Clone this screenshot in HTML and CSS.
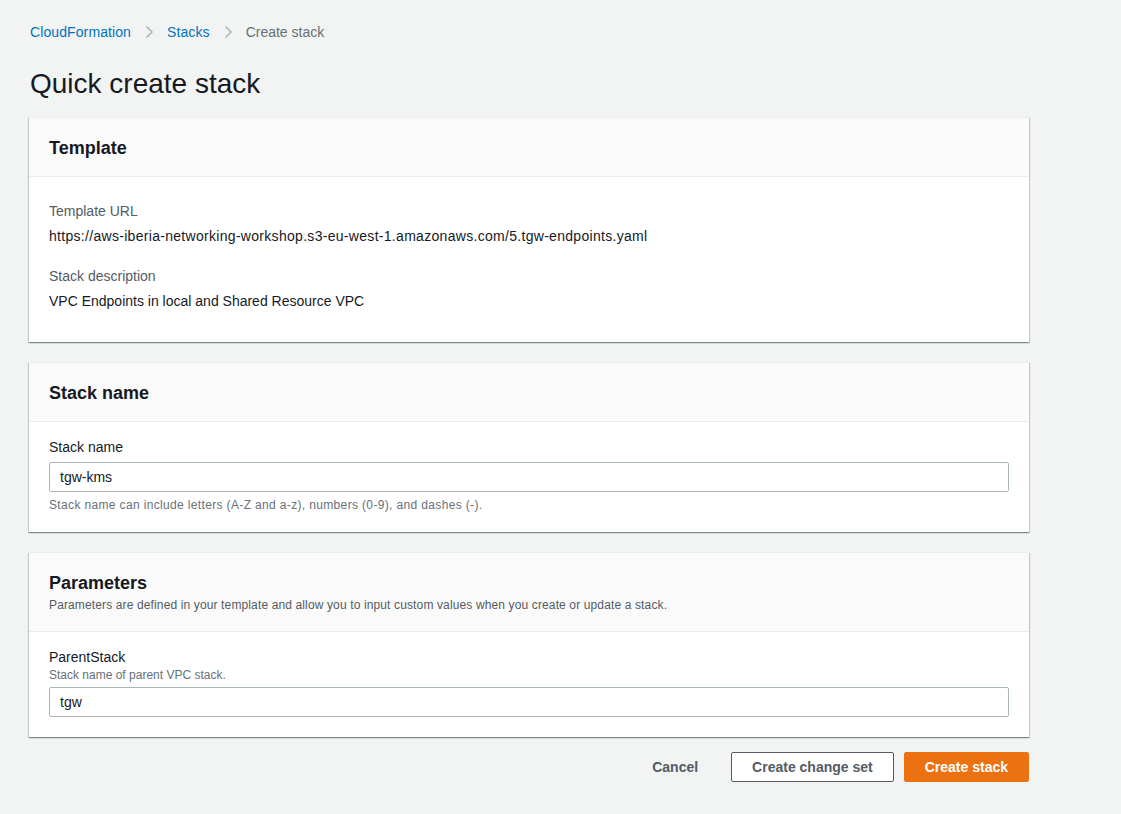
FILE: index.html
```html
<!DOCTYPE html>
<html lang="en">
<head>
<meta charset="utf-8">
<title>Quick create stack</title>
<link rel="stylesheet" href="styles.css">
</head>
<body>
<main class="page">
  <nav class="breadcrumbs">
    <a class="crumb-link" href="#">CloudFormation</a>
    <svg class="chev" width="14" height="14" viewBox="0 0 14 14"><path d="M4.5 1.5 L10 7 L4.5 12.5" fill="none" stroke="#aab7b8" stroke-width="1.5"/></svg>
    <a class="crumb-link" href="#">Stacks</a>
    <svg class="chev" width="14" height="14" viewBox="0 0 14 14"><path d="M4.5 1.5 L10 7 L4.5 12.5" fill="none" stroke="#aab7b8" stroke-width="1.5"/></svg>
    <span class="crumb-current">Create stack</span>
  </nav>

  <h1 class="page-title">Quick create stack</h1>

  <section class="card">
    <header class="card-header">
      <h2 class="card-title">Template</h2>
    </header>
    <div class="card-body card-body-template">
      <div class="kv">
        <div class="kv-label">Template URL</div>
        <div class="kv-value kv-url">https://aws-iberia-networking-workshop.s3-eu-west-1.amazonaws.com/5.tgw-endpoints.yaml</div>
      </div>
      <div class="kv">
        <div class="kv-label">Stack description</div>
        <div class="kv-value">VPC Endpoints in local and Shared Resource VPC</div>
      </div>
    </div>
  </section>

  <section class="card">
    <header class="card-header">
      <h2 class="card-title">Stack name</h2>
    </header>
    <div class="card-body card-body-name">
      <label class="field-label" for="stackname">Stack name</label>
      <input class="text-input" id="stackname" type="text" value="tgw-kms">
      <div class="field-hint">Stack name can include letters (A-Z and a-z), numbers (0-9), and dashes (-).</div>
    </div>
  </section>

  <section class="card">
    <header class="card-header card-header-desc">
      <h2 class="card-title">Parameters</h2>
      <p class="card-desc">Parameters are defined in your template and allow you to input custom values when you create or update a stack.</p>
    </header>
    <div class="card-body card-body-params">
      <label class="field-label field-label-tight" for="parent">ParentStack</label>
      <div class="field-desc">Stack name of parent VPC stack.</div>
      <input class="text-input" id="parent" type="text" value="tgw">
    </div>
  </section>

  <div class="actions">
    <button class="btn btn-link" type="button">Cancel</button>
    <button class="btn btn-normal" type="button">Create change set</button>
    <button class="btn btn-primary" type="button">Create stack</button>
  </div>
</main>
</body>
</html>
```

FILE: styles.css
```css
* { box-sizing: border-box; }

html, body {
  margin: 0;
  padding: 0;
  background: #f2f3f3;
}

body {
  font-family: "Liberation Sans", Arial, sans-serif;
  font-size: 14px;
  color: #16191f;
  width: 1121px;
  height: 814px;
  overflow: hidden;
}

.page {
  width: 1000px;
  margin-left: 29px;
  padding-top: 22px;
}

.breadcrumbs {
  display: flex;
  align-items: center;
  gap: 9px;
  height: 20px;
  padding-left: 1px;
  font-size: 14px;
}

.crumb-link {
  color: #0073bb;
  text-decoration: none;
  letter-spacing: 0.1px;
}

.chev { display: block; margin: 0 2px; }

.crumb-current { color: #687078; }

.page-title {
  margin: 24px 0 0 1px;
  font-size: 28px;
  font-weight: 400;
  line-height: 36px;
  color: #16191f;
}

.card {
  background: #fff;
  box-shadow: 0 1px 1px 0 rgba(0, 28, 36, 0.3), 1px 1px 1px 0 rgba(0, 28, 36, 0.15), -1px 1px 1px 0 rgba(0, 28, 36, 0.15);
  border-top: 1px solid #eaeded;
}

.card + .card { margin-top: 20px; }

.page-title + .card { margin-top: 15px; }

.card-header {
  background: #fafafa;
  border-bottom: 1px solid #eaeded;
  padding: 19px 20px 17px;
}

.card-header-desc { padding: 19px 20px 18px; }

.card-title {
  margin: 0;
  font-size: 18px;
  font-weight: 700;
  line-height: 22px;
  color: #16191f;
}

.card-desc {
  margin: 3px 0 0;
  font-size: 12px;
  line-height: 16px;
  color: #545b64;
  letter-spacing: 0.13px;
}

.card-body {
  padding: 15px 20px 20px;
}

.card-body-template {
  padding: 24px 20px 31px;
  display: flex;
  flex-direction: column;
  gap: 20px;
}

.card-body-name { padding-bottom: 19px; }

.card-body-params { padding-bottom: 20px; }

.kv-label {
  color: #545b64;
  line-height: 20px;
}

.kv-value {
  margin-top: 5px;
  line-height: 20px;
}

.kv-url { letter-spacing: 0.3px; }

.field-label {
  display: block;
  line-height: 20px;
  color: #16191f;
  margin-bottom: 5px;
}

.field-label-tight { margin-bottom: 0; }

.field-desc {
  font-size: 12px;
  line-height: 16px;
  color: #687078;
  margin-bottom: 4px;
}

.text-input {
  display: block;
  width: 960px;
  height: 30px;
  border: 1px solid #aab7b8;
  border-radius: 2px;
  padding: 0 10px;
  font-family: inherit;
  font-size: 14px;
  color: #16191f;
  background: #fff;
  outline: none;
}

.field-hint {
  margin-top: 5px;
  font-size: 12px;
  line-height: 16px;
  color: #687078;
  letter-spacing: 0.35px;
}

.actions {
  display: flex;
  justify-content: flex-end;
  align-items: center;
  gap: 10px;
  margin-top: 15px;
}

.btn {
  height: 30px;
  font-family: inherit;
  font-size: 14px;
  font-weight: 700;
  border-radius: 2px;
  padding: 0 20px;
  cursor: pointer;
}

.btn-link {
  background: transparent;
  border: 1px solid transparent;
  color: #545b64;
  margin-right: 2px;
}

.btn-normal {
  background: #fff;
  border: 1px solid #545b64;
  color: #545b64;
}

.btn-primary {
  background: #ec7211;
  border: 1px solid #ec7211;
  color: #fff;
}
```
